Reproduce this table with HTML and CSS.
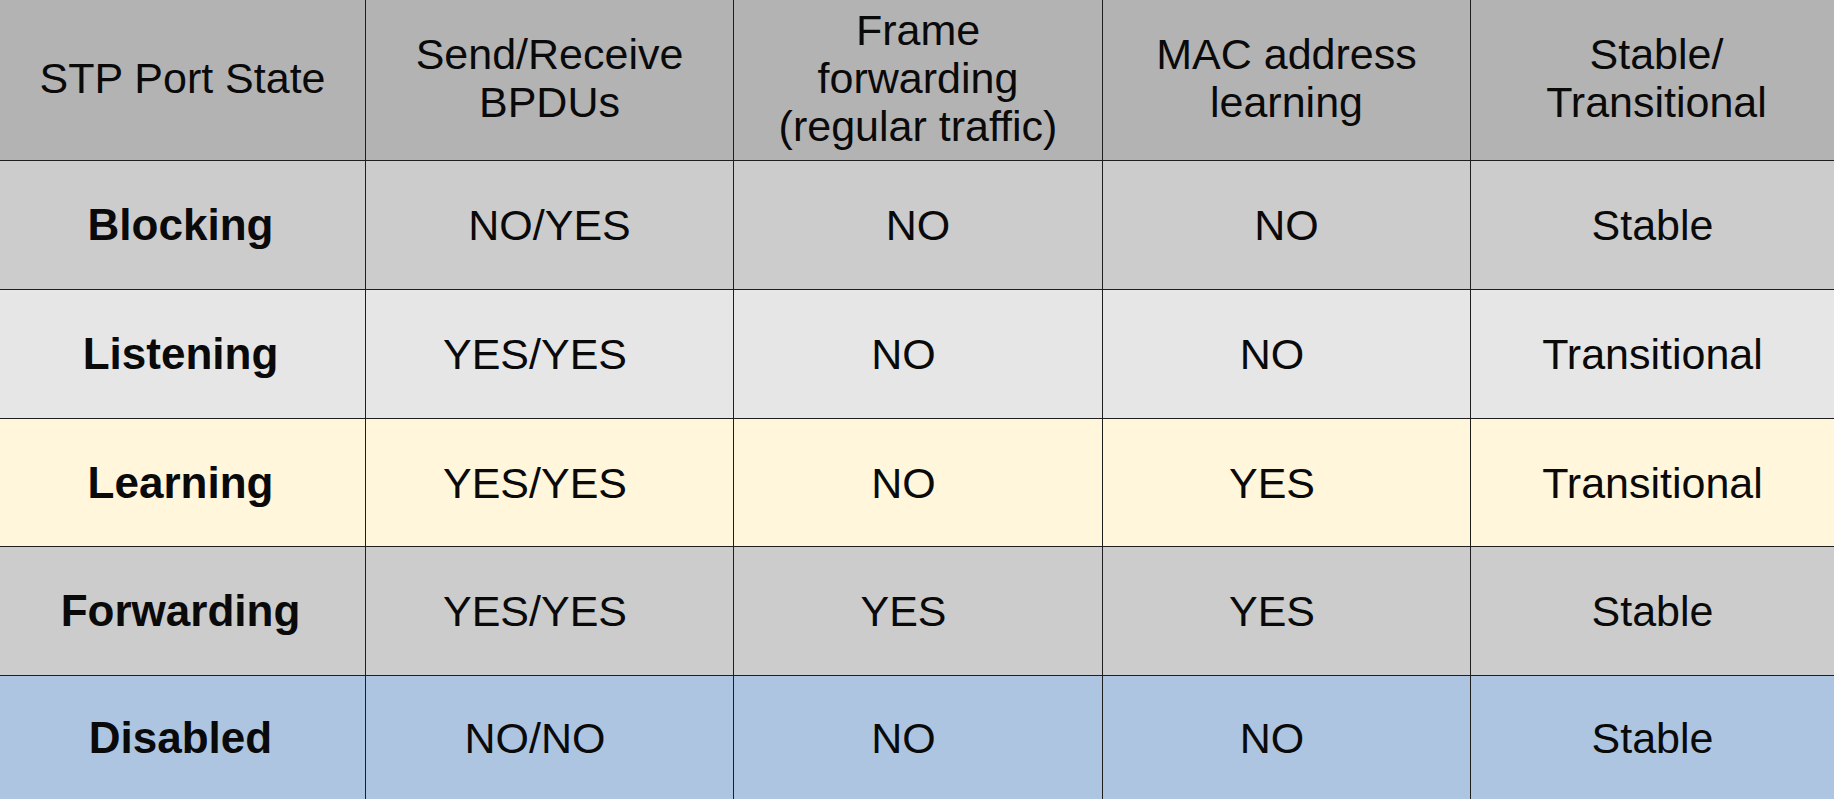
FILE: index.html
```html
<!DOCTYPE html>
<html>
<head>
<meta charset="utf-8">
<link rel="stylesheet" href="styles.css">
</head>
<body>
<div class="table">
  <div class="cell head">STP Port State</div>
  <div class="cell head">Send/Receive<br>BPDUs</div>
  <div class="cell head">Frame<br>forwarding<br>(regular traffic)</div>
  <div class="cell head">MAC address<br>learning</div>
  <div class="cell head last">Stable/<br>Transitional</div>

  <div class="cell r-block label">Blocking</div>
  <div class="cell r-block">NO/YES</div>
  <div class="cell r-block">NO</div>
  <div class="cell r-block">NO</div>
  <div class="cell r-block">Stable</div>

  <div class="cell r-listen label">Listening</div>
  <div class="cell r-listen shift">YES/YES</div>
  <div class="cell r-listen shift">NO</div>
  <div class="cell r-listen shift">NO</div>
  <div class="cell r-listen">Transitional</div>

  <div class="cell r-learn label">Learning</div>
  <div class="cell r-learn shift">YES/YES</div>
  <div class="cell r-learn shift">NO</div>
  <div class="cell r-learn shift">YES</div>
  <div class="cell r-learn">Transitional</div>

  <div class="cell r-fwd label">Forwarding</div>
  <div class="cell r-fwd shift">YES/YES</div>
  <div class="cell r-fwd shift">YES</div>
  <div class="cell r-fwd shift">YES</div>
  <div class="cell r-fwd">Stable</div>

  <div class="cell r-dis label">Disabled</div>
  <div class="cell r-dis shift">NO/NO</div>
  <div class="cell r-dis shift">NO</div>
  <div class="cell r-dis shift">NO</div>
  <div class="cell r-dis">Stable</div>
</div>
</body>
</html>
```

FILE: styles.css
```css
html, body {
  margin: 0;
  padding: 0;
  overflow: hidden;
  background: #adc5e0;
}

.table {
  display: grid;
  grid-template-columns: 365px 367px 368px 367px 363px;
  grid-template-rows: 160px 128px 128px 127px 128px 128px;
  gap: 1px;
  background: #1e1e1e;
  width: 1834px;
  font-family: "Liberation Sans", Arial, sans-serif;
  font-size: 43px;
  line-height: 48px;
  color: #0a0a0a;
}

.cell {
  display: flex;
  align-items: center;
  justify-content: center;
  text-align: center;
  box-sizing: border-box;
}

.head {
  background: #b3b3b3;
  padding-bottom: 4px;
}

.head.last {
  padding-left: 8px;
}

.label {
  font-weight: bold;
  font-size: 44px;
  padding-right: 4px;
}

.shift {
  padding-right: 29px;
}

.r-block { background: #cccccc; }
.r-listen { background: #e6e6e6; }
.r-learn { background: #fff6dc; }
.r-fwd { background: #cccccc; }
.r-dis { background: #adc5e0; padding-bottom: 4px; }
```
